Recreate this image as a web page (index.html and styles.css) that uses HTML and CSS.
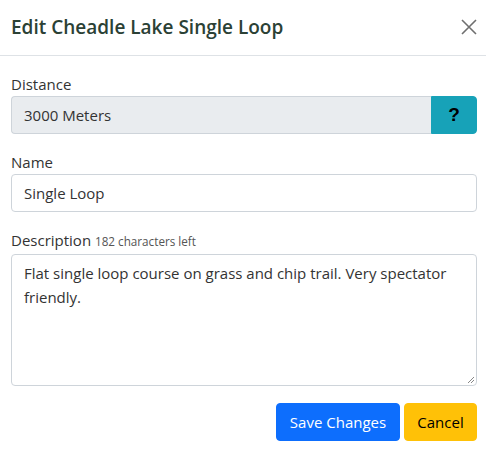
FILE: index.html
```html
<!DOCTYPE html>
<html lang="en">
<head>
<meta charset="utf-8">
<title>Edit Cheadle Lake Single Loop</title>
<link rel="stylesheet" href="styles.css">
</head>
<body>
<div class="modal">
  <div class="modal-header">
    <h5 class="modal-title">Edit Cheadle Lake Single Loop</h5>
    <button class="btn-close" type="button" aria-label="Close">
      <svg width="16" height="16" viewBox="0 0 16 16"><path d="M1 1L15 15M15 1L1 15" stroke="#6f6f6f" stroke-width="1.6" fill="none"/></svg>
    </button>
  </div>
  <div class="modal-body">
    <div class="field">
      <label class="form-label">Distance</label>
      <div class="input-group">
        <div class="form-control readonly">3000 Meters</div>
        <button class="btn btn-info" type="button">?</button>
      </div>
    </div>
    <div class="field">
      <label class="form-label">Name</label>
      <div class="form-control">Single Loop</div>
    </div>
    <div class="field">
      <label class="form-label">Description <small class="hint">182 characters left</small></label>
      <div class="form-control textarea">Flat single loop course on grass and chip trail. Very spectator friendly.<svg class="grip" width="9" height="9" viewBox="0 0 9 9"><path d="M8 2L2 8M8 5L5 8" stroke="#888" stroke-width="1"/></svg></div>
    </div>
    <div class="actions">
      <button class="btn btn-primary" type="button">Save Changes</button>
      <button class="btn btn-warning" type="button">Cancel</button>
    </div>
  </div>
</div>
</body>
</html>
```

FILE: styles.css
```css
* { box-sizing: border-box; }
html, body { margin: 0; padding: 0; background: #fff; }
body {
  font-family: "Open Sans", "Noto Sans", sans-serif;
  font-size: 15px;
  line-height: 24px;
  color: #212529;
}
.modal { width: 486px; }
.modal-header {
  height: 56px;
  display: flex;
  align-items: center;
  justify-content: space-between;
  padding: 0 9px 0 11px;
  border-bottom: 1px solid #dee2e6;
}
.modal-title {
  margin: 0;
  font-size: 19px;
  font-weight: 600;
  color: #2b4135;
  line-height: 24px;
  padding-bottom: 2px;
}
.btn-close {
  border: 0;
  background: transparent;
  padding: 0;
  width: 16px;
  height: 16px;
  display: flex;
  margin-bottom: 2px;
}
.modal-body {
  padding: 16px 9px 0 11px;
}
.field { margin-bottom: 16px; }
.form-label {
  display: block;
  color: #333;
}
.hint {
  font-size: 11.7px;
  color: #555;
}
.input-group { display: flex; }
.form-control {
  height: 38px;
  border: 1px solid #ced4da;
  border-radius: 4px;
  padding: 6px 12px;
  color: #333;
  background: #fff;
}
.input-group .form-control {
  flex: 1;
  border-radius: 4px 0 0 4px;
  border-right: 0;
}
.readonly { background: #e9ecef; }
.textarea {
  height: 132px;
  position: relative;
  margin-top: 1px;
}
.grip { position: absolute; right: 1px; bottom: 1px; }
.btn {
  height: 38px;
  border: 1px solid transparent;
  border-radius: 4px;
  padding: 0 12px;
  font-family: inherit;
  font-size: 15px;
  line-height: 24px;
  cursor: pointer;
}
.btn-info {
  width: 46px;
  background: #17a2b8;
  border-color: #17a2b8;
  border-radius: 0 4px 4px 0;
  color: #000;
  font-weight: 800;
  font-size: 19px;
  font-family: "Liberation Sans", sans-serif;
}
.actions {
  display: flex;
  justify-content: flex-end;
  gap: 4px;
  margin-top: 17px;
}
.btn-primary { background: #0d6efd; border-color: #0d6efd; color: #fff; width: 124px; }
.btn-warning { background: #ffc107; border-color: #ffc107; color: #000; width: 73px; }
```
